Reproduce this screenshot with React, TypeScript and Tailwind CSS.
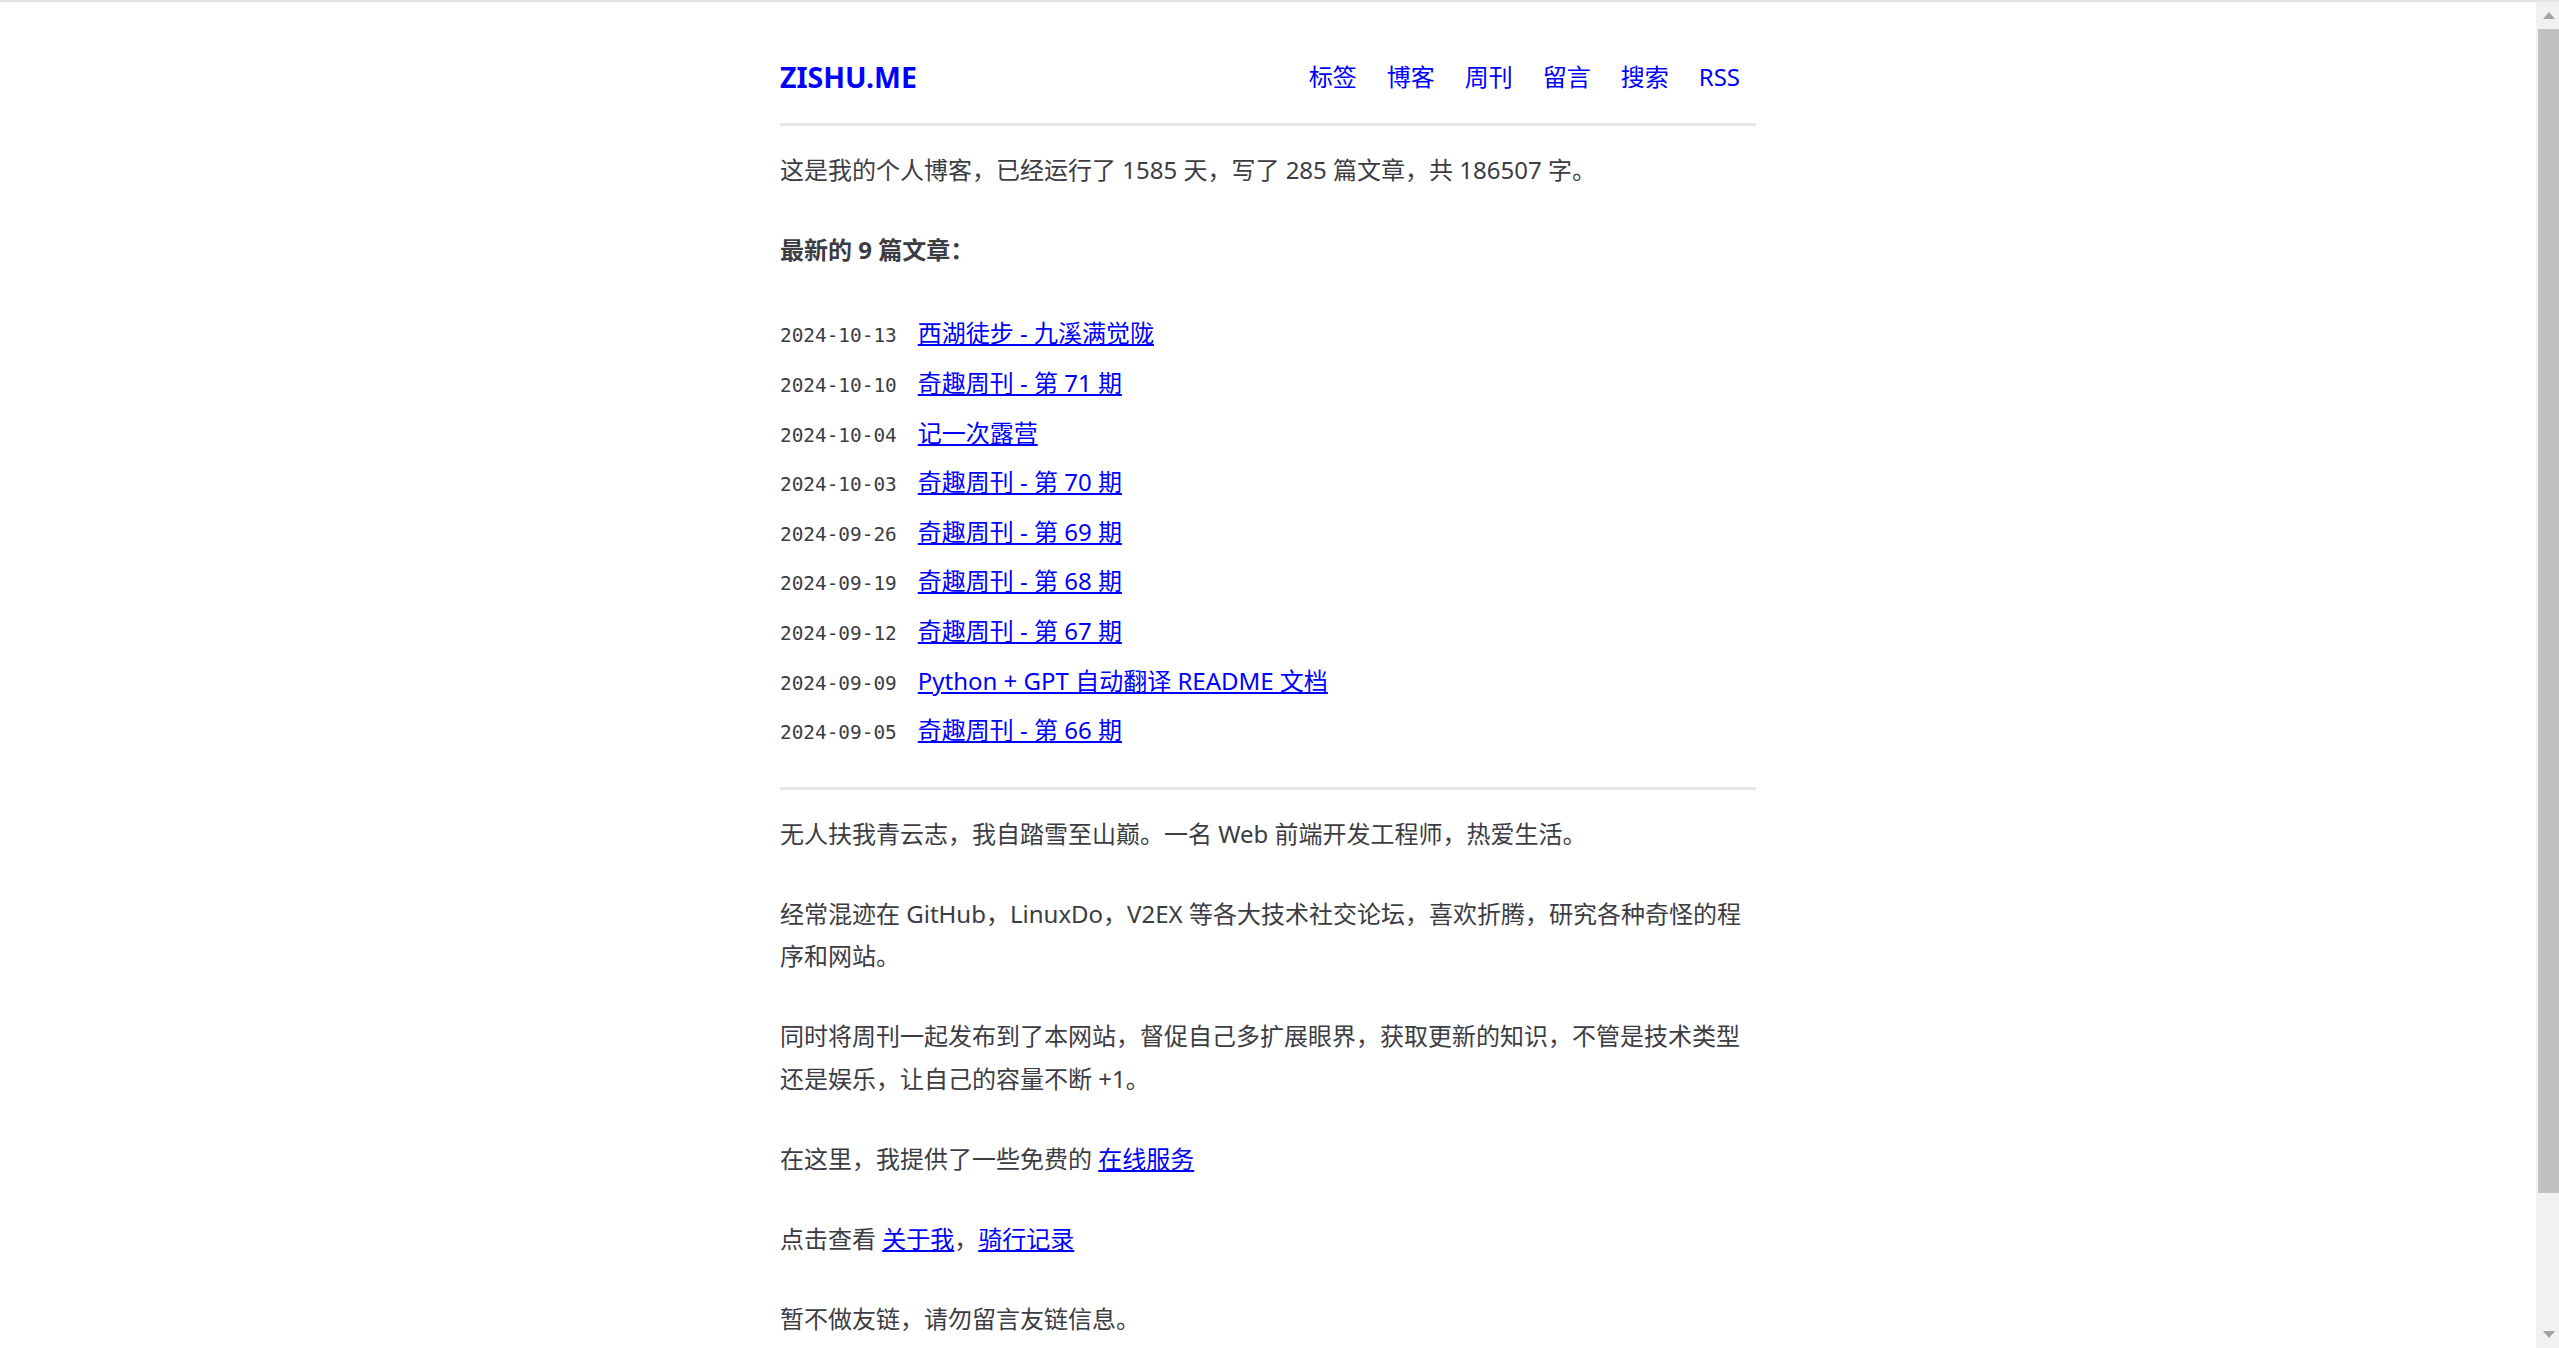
import React from "react";

interface Post {
  date: string;
  title: string;
}

const navItems = ["标签", "博客", "周刊", "留言", "搜索", "RSS"];

const posts: Post[] = [
  { date: "2024-10-13", title: "西湖徒步 - 九溪满觉陇" },
  { date: "2024-10-10", title: "奇趣周刊 - 第 71 期" },
  { date: "2024-10-04", title: "记一次露营" },
  { date: "2024-10-03", title: "奇趣周刊 - 第 70 期" },
  { date: "2024-09-26", title: "奇趣周刊 - 第 69 期" },
  { date: "2024-09-19", title: "奇趣周刊 - 第 68 期" },
  { date: "2024-09-12", title: "奇趣周刊 - 第 67 期" },
  { date: "2024-09-09", title: "Python + GPT 自动翻译 README 文档" },
  { date: "2024-09-05", title: "奇趣周刊 - 第 66 期" },
];

// browser scrollbar as it shows in the screenshot
const Scrollbar: React.FC = () => (
  <div className="w-[23px] shrink-0 bg-[#f1f1f1] flex flex-col">
    <div className="h-[27px] flex items-center justify-center pl-[2px]">
      <svg width="12" height="7" viewBox="0 0 12 7">
        <path d="M6 0 L12 7 L0 7 Z" fill="#a3a3a3" />
      </svg>
    </div>
    <div className="h-[1164px] ml-[2px] bg-[#c1c1c1]" />
    <div className="flex-1" />
    <div className="h-[27px] flex items-center justify-center pl-[2px]">
      <svg width="12" height="7" viewBox="0 0 12 7">
        <path d="M0 0 L12 0 L6 7 Z" fill="#a3a3a3" />
      </svg>
    </div>
  </div>
);

const App: React.FC = () => {
  return (
    <div className="h-screen flex flex-col bg-white border-t-2 border-[#e3e3e3]">
      <div className="flex-1 min-h-0 flex">
        <div
          className="flex-1 min-w-0 overflow-hidden text-[#3c3c43] text-[24px] leading-[42.4px]"
          style={{ fontFamily: '"Noto Sans", "Noto Sans CJK SC", sans-serif' }}
        >
          <div className="w-[976px] mx-auto">
            <header className="flex items-center justify-between h-[36px] mt-[57px] mb-[28px]">
              <a href="#" className="text-[28.5px] font-bold text-[#0000ff] leading-[36px]">
                ZISHU.ME
              </a>
              <nav className="flex items-center gap-[30px] pr-[16px]">
                {navItems.map((item) => (
                  <a key={item} href="#" className="text-[#0000ff] text-[24px] leading-[36px]">
                    {item}
                  </a>
                ))}
              </nav>
            </header>
            <div className="h-[3px] bg-[#e5e5ea]" />

            <main>
              <p className="mt-[23px]">
                这是我的个人博客，已经运行了 1585 天，写了 285 篇文章，共 186507 字。
              </p>

              <p className="mt-[37.6px] font-bold">最新的 9 篇文章：</p>

              <ul className="mt-[37px] mb-[32px]">
                {posts.map((post) => (
                  <li key={post.date + post.title} className="h-[49.6px] leading-[49.6px] whitespace-nowrap">
                    <span
                      className="inline-block text-[19.4px] leading-none mr-[21px]"
                      style={{ fontFamily: '"DejaVu Sans Mono", monospace' }}
                    >
                      {post.date}
                    </span>
                    <a href="#" className="text-[#0000ff] underline">
                      {post.title}
                    </a>
                  </li>
                ))}
              </ul>
              <div className="h-[3px] bg-[#e5e5ea]" />

              <div className="mt-[23px] flex flex-col gap-[37.6px] pb-[190px]">
                <p>无人扶我青云志，我自踏雪至山巅。一名 Web 前端开发工程师，热爱生活。</p>
                <p>
                  经常混迹在 GitHub，LinuxDo，V2EX 等各大技术社交论坛，喜欢折腾，研究各种奇怪的程序和网站。
                </p>
                <p>
                  同时将周刊一起发布到了本网站，督促自己多扩展眼界，获取更新的知识，不管是技术类型还是娱乐，让自己的容量不断 +1。
                </p>
                <p>
                  在这里，我提供了一些免费的{" "}
                  <a href="#" className="text-[#0000ff] underline">
                    在线服务
                  </a>
                </p>
                <p>
                  点击查看{" "}
                  <a href="#" className="text-[#0000ff] underline">
                    关于我
                  </a>
                  ，
                  <a href="#" className="text-[#0000ff] underline">
                    骑行记录
                  </a>
                </p>
                <p>暂不做友链，请勿留言友链信息。</p>
              </div>
            </main>
          </div>
        </div>
        <Scrollbar />
      </div>
    </div>
  );
};

export default App;
